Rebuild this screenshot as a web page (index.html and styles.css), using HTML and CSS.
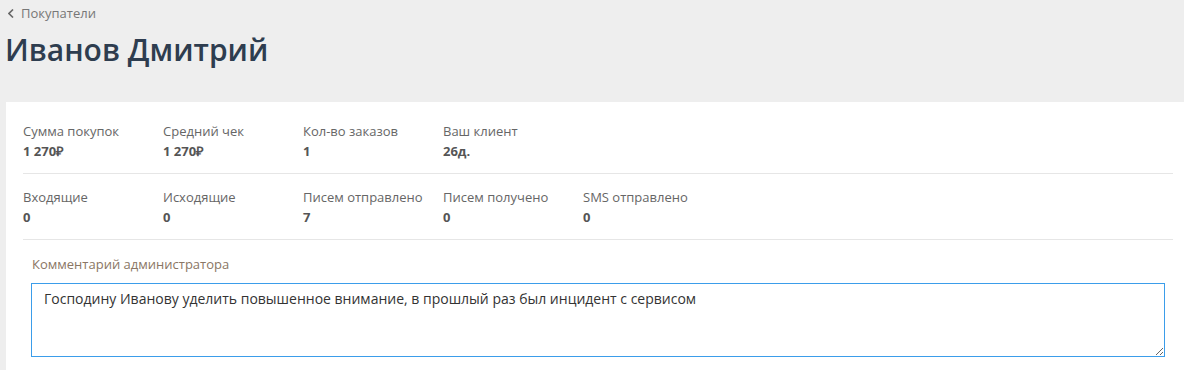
FILE: index.html
```html
<!DOCTYPE html>
<html lang="ru">
<head>
    <meta charset="UTF-8">
    <meta name="viewport" content="width=device-width, initial-scale=1.0">
    <title>Иванов Дмитрий</title>
    <link rel="stylesheet" href="styles.css">
</head>
<body>
    <div class="page-head">
        <a class="back-link" href="#">
            <svg class="back-icon" width="6" height="9" viewBox="0 0 6 9"><polyline points="5,0.5 1,4.5 5,8.5" fill="none" stroke="#666" stroke-width="1.6"/></svg>
            Покупатели
        </a>
        <h1 class="title">Иванов Дмитрий</h1>
    </div>

    <div class="panel">
        <div class="stats-row">
            <div class="stat">
                <div class="stat-label">Сумма покупок</div>
                <div class="stat-value">1 270₽</div>
            </div>
            <div class="stat">
                <div class="stat-label">Средний чек</div>
                <div class="stat-value">1 270₽</div>
            </div>
            <div class="stat">
                <div class="stat-label">Кол-во заказов</div>
                <div class="stat-value">1</div>
            </div>
            <div class="stat">
                <div class="stat-label">Ваш клиент</div>
                <div class="stat-value">26д.</div>
            </div>
        </div>
        <div class="stats-row">
            <div class="stat">
                <div class="stat-label">Входящие</div>
                <div class="stat-value">0</div>
            </div>
            <div class="stat">
                <div class="stat-label">Исходящие</div>
                <div class="stat-value">0</div>
            </div>
            <div class="stat">
                <div class="stat-label">Писем отправлено</div>
                <div class="stat-value">7</div>
            </div>
            <div class="stat">
                <div class="stat-label">Писем получено</div>
                <div class="stat-value">0</div>
            </div>
            <div class="stat">
                <div class="stat-label">SMS отправлено</div>
                <div class="stat-value">0</div>
            </div>
        </div>

        <div class="comment">
            <label class="comment-label" for="comment">Комментарий администратора</label>
            <textarea id="comment" class="comment-input" autofocus>Господину Иванову уделить повышенное внимание, в прошлый раз был инцидент с сервисом</textarea>
        </div>
    </div>

    <script>
        const area = document.getElementById("comment");
        area.focus();
        area.setSelectionRange(area.value.length, area.value.length);
    </script>
</body>
</html>
```

FILE: styles.css
```css
body {
    font-family: "Open Sans", Arial, sans-serif;
    background-color: #eeeeee;
    margin: 0;
    padding: 0;
    color: #333;
}

.page-head {
    padding: 4px 0 0 5px;
    height: 97px;
    box-sizing: border-box;
}

.back-link {
    display: flex;
    align-items: center;
    gap: 7px;
    padding-left: 3px;
    height: 18px;
    font-size: 13px;
    color: #777;
    text-decoration: none;
}

.title {
    margin: 8px 0 0;
    font-size: 30px;
    font-weight: 600;
    line-height: 40px;
    color: #2e3d4f;
}

.panel {
    background-color: #fff;
    margin: 5px 0 0 6px;
    padding: 6px 11px 20px 17px;
}

.stats-row {
    display: flex;
    padding: 14px 0 13px;
    border-bottom: 1px solid #e6e6e6;
}

.stat {
    width: 140px;
}

.stat-label {
    font-size: 13px;
    line-height: 18px;
    color: #666;
}

.stat-value {
    margin-top: 2px;
    font-size: 13px;
    line-height: 18px;
    font-weight: 700;
    color: #555;
}

.comment {
    padding: 15px 8px 0;
}

.comment-label {
    display: block;
    padding-left: 1px;
    font-size: 13px;
    line-height: 18px;
    color: #8a7664;
}

.comment-input {
    display: block;
    box-sizing: border-box;
    width: 100%;
    height: 74px;
    margin-top: 10px;
    padding: 5px 12px;
    border: 1px solid #3b9dea;
    border-radius: 0;
    outline: none;
    font-family: "Open Sans", Arial, sans-serif;
    font-size: 14px;
    line-height: 20px;
    color: #333;
}
```
